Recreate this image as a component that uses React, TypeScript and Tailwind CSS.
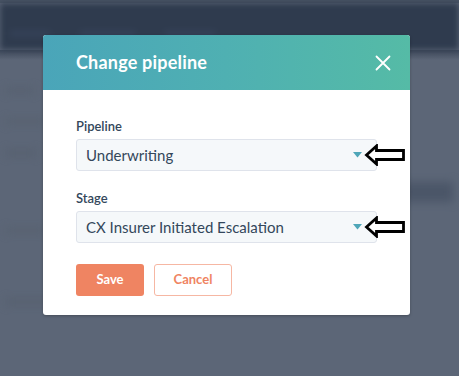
import React from "react";

const Caret = () => (
  <svg width="9" height="6" viewBox="0 0 9 6" className="shrink-0">
    <path d="M0 0 L9 0 L4.5 5.5 Z" fill="#4fa6b8" />
  </svg>
);

const PointerArrow = () => (
  <svg width="42" height="22" viewBox="0 0 42 22">
    <path
      d="M2.5 11 L12.5 2 L12.5 6.5 L39.5 6.5 L39.5 15.5 L12.5 15.5 L12.5 20 Z"
      fill="white"
      stroke="black"
      strokeWidth="2.8"
      strokeLinejoin="miter"
    />
  </svg>
);

const SelectField = ({ label, value }: { label: string; value: string }) => (
  <div className="flex flex-col">
    <label className="text-[13px] leading-[18px] font-semibold text-[#33475b] mb-[4px]">{label}</label>
    <div className="h-[32px] w-[301px] rounded-[3px] border border-[#dfe3eb] bg-[#f5f8fa] flex items-center justify-between pl-[9px] pr-[14px]">
      <span className="text-[15px] text-[#33475b]">{value}</span>
      <Caret />
    </div>
  </div>
);

const App = () => {
  return (
    <div
      className="relative w-[459px] h-[376px] overflow-hidden bg-[#5c6677]"
      style={{ fontFamily: "Lato, 'Noto Sans', sans-serif" }}
    >
      {/* Backdrop (blurred page behind) */}
      <div className="flex flex-col h-full">
        <div className="h-[3px] bg-[#4a5566]" />
        <div className="h-[47px] bg-[#2f3b4e] flex items-end gap-[30px] px-[10px] pb-[14px] blur-[3px]">
          <div className="h-[5px] w-[40px] bg-[#36435a]" />
          <div className="h-[5px] w-[55px] bg-[#36435a]" />
          <div className="h-[5px] w-[50px] bg-[#36435a]" />
        </div>
        <div className="h-[10px] bg-gradient-to-b from-[#3f4a5c] to-[#5c6677]" />
        <div className="flex-1 flex flex-col gap-[26px] pt-[28px] px-[6px] blur-[4px]">
          <div className="h-[5px] w-[28px] bg-[#56606f]" />
          <div className="h-[5px] w-[40px] bg-[#57616f]" />
          <div className="h-[6px] w-[30px] bg-[#56606f]" />
          <div className="h-[20px] w-full flex justify-end">
            <div className="w-[50px] bg-[#4b5668]" />
          </div>
          <div className="h-[5px] w-[40px] bg-[#57616f]" />
          <div className="h-[6px] w-[130px] bg-[#56606f] mt-[40px]" />
        </div>
      </div>

      {/* Modal */}
      <div className="absolute left-[43px] top-[35px] w-[367px] bg-white rounded-[3px] shadow-[0_1px_3px_rgba(0,0,0,0.25)] overflow-hidden">
        <div className="h-[55px] flex items-center justify-between pl-[33px] pr-[19px] bg-gradient-to-r from-[#4aa5b9] via-[#4fb0b2] to-[#55bba6]">
          <h2 className="text-[18px] font-bold text-white tracking-[0.2px]">Change pipeline</h2>
          <svg width="16" height="16" viewBox="0 0 16 16">
            <path d="M1.5 1.5 L14.5 14.5 M14.5 1.5 L1.5 14.5" stroke="white" strokeWidth="1.8" strokeLinecap="round" />
          </svg>
        </div>

        <div className="flex flex-col px-[33px] pt-[27px] pb-[19px]">
          <SelectField label="Pipeline" value="Underwriting" />
          <div className="h-[18px]" />
          <SelectField label="Stage" value="CX Insurer Initiated Escalation" />

          <div className="flex gap-[10px] mt-[21px]">
            <button className="h-[32px] w-[68px] rounded-[3px] bg-[#ef8462] text-white text-[13px] font-bold">
              Save
            </button>
            <button className="h-[32px] w-[78px] rounded-[3px] border border-[#f6b7a3] bg-white text-[#ef8462] text-[13px] font-bold">
              Cancel
            </button>
          </div>
        </div>
      </div>

      {/* Annotation arrows */}
      <div className="absolute left-[364px] top-[144px]">
        <PointerArrow />
      </div>
      <div className="absolute left-[364px] top-[216px]">
        <PointerArrow />
      </div>
    </div>
  );
};

export default App;
